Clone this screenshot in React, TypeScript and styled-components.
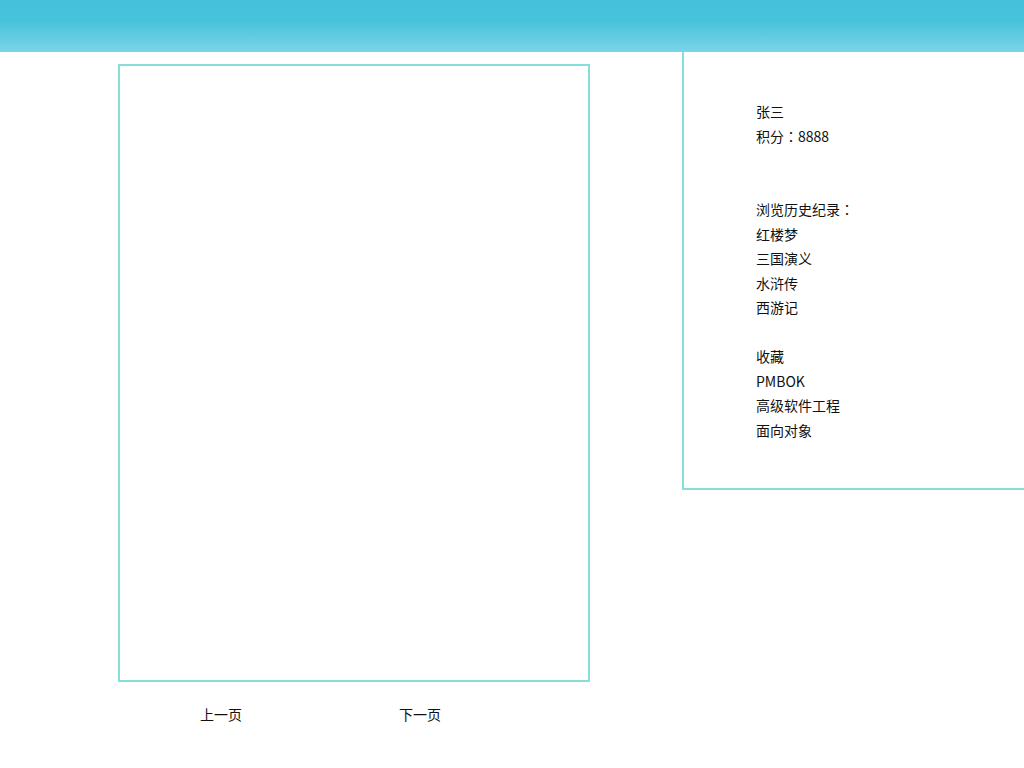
import React from 'react';
import styled, { createGlobalStyle } from 'styled-components';

const GlobalStyle = createGlobalStyle`
  html, body {
    margin: 0;
    padding: 0;
    background: #ffffff;
  }
  body {
    font-family: "Noto Sans CJK SC", "Noto Sans", sans-serif;
    color: #111111;
  }
`;

const Header = styled.header`
  height: 52px;
  background: linear-gradient(to bottom, #44c1db 0%, #48c3dc 40%, #7bd4e7 100%);
`;

const Main = styled.div`
  display: flex;
  align-items: flex-start;
`;

const ReaderColumn = styled.div`
  display: flex;
  flex-direction: column;
  padding-left: 118px;
  padding-top: 12px;
`;

const Page = styled.div`
  box-sizing: border-box;
  width: 472px;
  height: 618px;
  border: 2px solid #88deda;
`;

const Pager = styled.div`
  display: flex;
  gap: 157px;
  padding-top: 22px;
  padding-left: 82px;
`;

const PagerButton = styled.span`
  font-size: 14px;
  line-height: 20px;
  width: 42px;
  white-space: nowrap;
  cursor: pointer;
`;

const SidePanel = styled.aside`
  box-sizing: border-box;
  margin-left: auto;
  width: 342px;
  height: 438px;
  border-left: 2px solid #88deda;
  border-bottom: 2px solid #88deda;
  padding: 47px 0 0 72px;
`;

const Line = styled.div<{ gapBefore?: number }>`
  font-size: 14px;
  line-height: 24.5px;
  margin-top: ${p => (p.gapBefore ?? 0) * 24.5}px;
  white-space: nowrap;
`;

// full-width colon drawn centred, as in the reference
const Colon = styled.span`
  font-family: "Noto Sans CJK JP", "Noto Sans CJK SC", sans-serif;
`;

const history = ['红楼梦', '三国演义', '水浒传', '西游记'];
const favorites = ['PMBOK', '高级软件工程', '面向对象'];

const App: React.FC = () => (
  <>
    <GlobalStyle />
    <Header />
    <Main>
      <ReaderColumn>
        <Page />
        <Pager>
          <PagerButton>上一页</PagerButton>
          <PagerButton>下一页</PagerButton>
        </Pager>
      </ReaderColumn>
      <SidePanel>
        <Line>张三</Line>
        <Line>积分<Colon>：</Colon>8888</Line>
        <Line gapBefore={2}>浏览历史纪录<Colon>：</Colon></Line>
        {history.map(h => (
          <Line key={h}>{h}</Line>
        ))}
        <Line gapBefore={1}>收藏</Line>
        {favorites.map(f => (
          <Line key={f}>{f}</Line>
        ))}
      </SidePanel>
    </Main>
  </>
);

export default App;
